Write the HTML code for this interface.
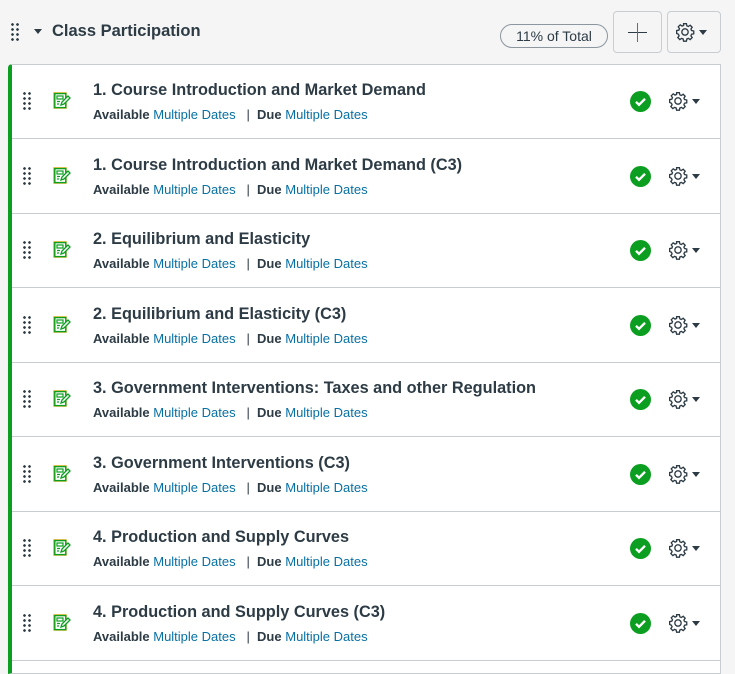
<!DOCTYPE html>
<html><head><meta charset="utf-8"><style>
*{box-sizing:border-box;margin:0;padding:0}
body{width:735px;height:663px;background:#f5f5f5;font-family:"Liberation Sans",sans-serif;color:#2d3b45;position:relative;overflow:hidden}
.abs{position:absolute}
.dots{position:absolute;width:10px;height:20px;background-image:radial-gradient(circle,#2d3b45 1.2px,transparent 1.5px);background-size:5px 5px}
.list{position:absolute;left:8px;top:64px;width:713px;height:610px;background:#fff;border:1px solid #c7cdd1;border-left:4px solid #0b9e20;border-radius:4px 0 0 0}
.row{position:absolute;left:12px;width:709px;height:75px;border-bottom:1px solid #c7cdd1}
.title{position:absolute;left:81px;top:17px;font-size:16.3px;font-weight:bold;letter-spacing:0;white-space:nowrap}
.meta{position:absolute;left:81px;top:43px;font-size:13px;white-space:nowrap;letter-spacing:0}
.meta b{color:#2d3b45;font-weight:bold}
.meta span{color:#0770a3}
.check{position:absolute;left:618px;top:27px;width:21px;height:21px;border-radius:50%;background:#0b9e20}
.caret{position:absolute;width:0;height:0;border-left:4px solid transparent;border-right:4px solid transparent;border-top:5px solid #2d3b45}
.ic{position:absolute;left:41px;top:28px}
.gear{position:absolute;left:656px;top:27px}
.rc{left:680px;top:35px}
</style></head><body>
<div class="dots" style="left:10px;top:22px"></div>
<div class="caret" style="left:34px;top:29px"></div>
<div class="abs" style="left:52px;top:22px;font-size:16.5px;font-weight:bold">Class Participation</div>
<div class="abs" style="left:500px;top:24px;width:108px;height:24px;border:1px solid #8b969e;border-radius:12px;background:#f5f5f5;font-size:14px;text-align:center;line-height:22px">11% of Total</div>
<div class="abs" style="left:613px;top:11px;width:49px;height:42px;border:1px solid #c7cdd1;border-radius:4px;background:#f5f5f5">
<div class="abs" style="left:14px;top:20px;width:19px;height:1.3px;background:#2d3b45"></div>
<div class="abs" style="left:23px;top:11px;width:1.3px;height:19px;background:#c44d1b"></div>
</div>
<div class="abs" style="left:667px;top:11px;width:54px;height:42px;border:1px solid #c7cdd1;border-radius:4px;background:#f5f5f5">
<svg class="abs" style="left:7px;top:10px" width="20" height="20" viewBox="0 0 24 24"><use href="#gr"/></svg>
<div class="caret" style="left:31px;top:18px"></div>
</div>
<div class="list"></div>

<svg width="0" height="0" style="position:absolute"><defs>
<g id="asg"><rect x="1" y="1" width="12" height="15" fill="none" stroke="#e5a800" stroke-width="1.4"/><rect x="1.8" y="1.6" width="11" height="14" fill="none" stroke="#0b9e20" stroke-width="1.4"/><rect x="4" y="4" width="6" height="3" fill="none" stroke="#0b9e20" stroke-width="1.2"/><path d="M4 9.5h3M4 12h2" stroke="#0b9e20" stroke-width="1.2"/><path d="M8 13l1-3 6-6 2 2-6 6z" fill="#fff" stroke="#0b9e20" stroke-width="1.3"/></g>
<g id="gr"><path fill="none" stroke="#2d3b45" stroke-width="1.6" d="M10.3 2h3.4l.5 2.6 1.8.8 2.2-1.5 2.4 2.4-1.5 2.2.8 1.8 2.6.5v3.4l-2.6.5-.8 1.8 1.5 2.2-2.4 2.4-2.2-1.5-1.8.8-.5 2.6h-3.4l-.5-2.6-1.8-.8-2.2 1.5-2.4-2.4 1.5-2.2-.8-1.8L2 13.7v-3.4l2.6-.5.8-1.8-1.5-2.2 2.4-2.4 2.2 1.5 1.8-.8z"/><circle cx="12" cy="12" r="3.8" fill="none" stroke="#2d3b45" stroke-width="1.6"/></g>
<g id="ck"><path d="M6 10.8l3 3 6-6" fill="none" stroke="#fff" stroke-width="2.4"/></g>
</defs></svg>

<div class="row" style="top:64px"><div class="dots" style="left:10px;top:27px"></div><svg class="ic" width="18" height="17" viewBox="0 0 18 17"><use href="#asg"/></svg><div class="title">1. Course Introduction and Market Demand</div><div class="meta"><b>Available</b> <span>Multiple Dates</span> &nbsp; | &nbsp;<b>Due</b> <span>Multiple Dates</span></div><div class="check"><svg width="21" height="21" viewBox="0 0 21 21"><use href="#ck"/></svg></div><svg class="gear" width="20" height="20" viewBox="0 0 24 24"><use href="#gr"/></svg><div class="caret rc"></div></div>

<div class="row" style="top:138.5px"><div class="dots" style="left:10px;top:27px"></div><svg class="ic" width="18" height="17" viewBox="0 0 18 17"><use href="#asg"/></svg><div class="title">1. Course Introduction and Market Demand (C3)</div><div class="meta"><b>Available</b> <span>Multiple Dates</span> &nbsp; | &nbsp;<b>Due</b> <span>Multiple Dates</span></div><div class="check"><svg width="21" height="21" viewBox="0 0 21 21"><use href="#ck"/></svg></div><svg class="gear" width="20" height="20" viewBox="0 0 24 24"><use href="#gr"/></svg><div class="caret rc"></div></div>

<div class="row" style="top:213px"><div class="dots" style="left:10px;top:27px"></div><svg class="ic" width="18" height="17" viewBox="0 0 18 17"><use href="#asg"/></svg><div class="title">2. Equilibrium and Elasticity</div><div class="meta"><b>Available</b> <span>Multiple Dates</span> &nbsp; | &nbsp;<b>Due</b> <span>Multiple Dates</span></div><div class="check"><svg width="21" height="21" viewBox="0 0 21 21"><use href="#ck"/></svg></div><svg class="gear" width="20" height="20" viewBox="0 0 24 24"><use href="#gr"/></svg><div class="caret rc"></div></div>

<div class="row" style="top:287.5px"><div class="dots" style="left:10px;top:27px"></div><svg class="ic" width="18" height="17" viewBox="0 0 18 17"><use href="#asg"/></svg><div class="title">2. Equilibrium and Elasticity (C3)</div><div class="meta"><b>Available</b> <span>Multiple Dates</span> &nbsp; | &nbsp;<b>Due</b> <span>Multiple Dates</span></div><div class="check"><svg width="21" height="21" viewBox="0 0 21 21"><use href="#ck"/></svg></div><svg class="gear" width="20" height="20" viewBox="0 0 24 24"><use href="#gr"/></svg><div class="caret rc"></div></div>

<div class="row" style="top:362px"><div class="dots" style="left:10px;top:27px"></div><svg class="ic" width="18" height="17" viewBox="0 0 18 17"><use href="#asg"/></svg><div class="title">3. Government Interventions: Taxes and other Regulation</div><div class="meta"><b>Available</b> <span>Multiple Dates</span> &nbsp; | &nbsp;<b>Due</b> <span>Multiple Dates</span></div><div class="check"><svg width="21" height="21" viewBox="0 0 21 21"><use href="#ck"/></svg></div><svg class="gear" width="20" height="20" viewBox="0 0 24 24"><use href="#gr"/></svg><div class="caret rc"></div></div>

<div class="row" style="top:436.5px"><div class="dots" style="left:10px;top:27px"></div><svg class="ic" width="18" height="17" viewBox="0 0 18 17"><use href="#asg"/></svg><div class="title">3. Government Interventions (C3)</div><div class="meta"><b>Available</b> <span>Multiple Dates</span> &nbsp; | &nbsp;<b>Due</b> <span>Multiple Dates</span></div><div class="check"><svg width="21" height="21" viewBox="0 0 21 21"><use href="#ck"/></svg></div><svg class="gear" width="20" height="20" viewBox="0 0 24 24"><use href="#gr"/></svg><div class="caret rc"></div></div>

<div class="row" style="top:511px"><div class="dots" style="left:10px;top:27px"></div><svg class="ic" width="18" height="17" viewBox="0 0 18 17"><use href="#asg"/></svg><div class="title">4. Production and Supply Curves</div><div class="meta"><b>Available</b> <span>Multiple Dates</span> &nbsp; | &nbsp;<b>Due</b> <span>Multiple Dates</span></div><div class="check"><svg width="21" height="21" viewBox="0 0 21 21"><use href="#ck"/></svg></div><svg class="gear" width="20" height="20" viewBox="0 0 24 24"><use href="#gr"/></svg><div class="caret rc"></div></div>

<div class="row" style="top:585.5px"><div class="dots" style="left:10px;top:27px"></div><svg class="ic" width="18" height="17" viewBox="0 0 18 17"><use href="#asg"/></svg><div class="title">4. Production and Supply Curves (C3)</div><div class="meta"><b>Available</b> <span>Multiple Dates</span> &nbsp; | &nbsp;<b>Due</b> <span>Multiple Dates</span></div><div class="check"><svg width="21" height="21" viewBox="0 0 21 21"><use href="#ck"/></svg></div><svg class="gear" width="20" height="20" viewBox="0 0 24 24"><use href="#gr"/></svg><div class="caret rc"></div></div>
</body></html>
